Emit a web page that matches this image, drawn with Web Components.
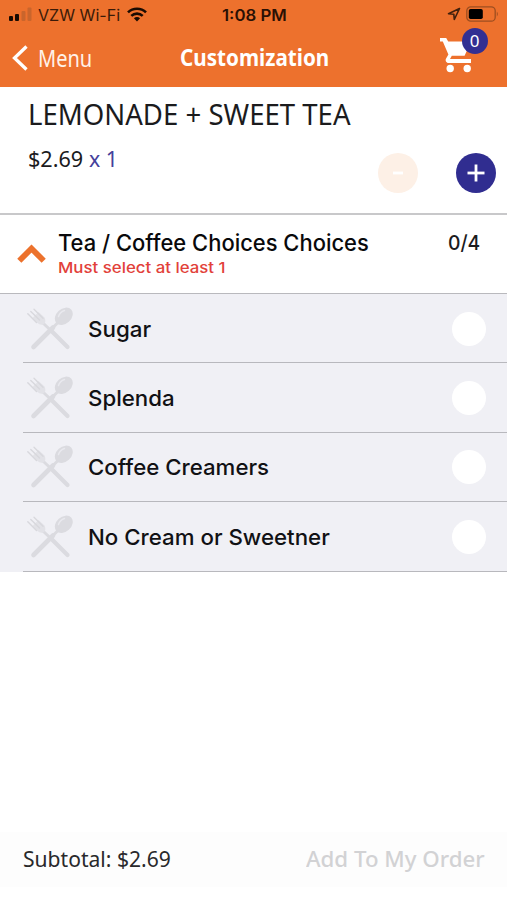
<!DOCTYPE html>
<html lang="en">
<head>
<meta charset="utf-8">
<title>Customization</title>
<style>
html,body{margin:0;padding:0;background:#fff}
body{width:507px;height:900px;overflow:hidden}
</style>
</head>
<body>
<order-screen></order-screen>
<script>
const SANS = "font-family:'Noto Sans','Open Sans',sans-serif;";
const UI = "font-family:Inter,'Liberation Sans',sans-serif;";

function define(name, html, setup) {
  customElements.define(name, class extends HTMLElement {
    connectedCallback() {
      if (this.shadowRoot) return;
      const root = this.attachShadow({ mode: 'open' });
      root.innerHTML = html;
      if (setup) setup(this, root);
    }
  });
}

/* A single line of text condensed or widened to the width given in "w". */
define('fit-text', `<style>
:host{display:block;white-space:nowrap;flex:none}
span{display:inline-block;transform-origin:0 50%;vertical-align:top}
</style><span><slot></slot></span>`, (host, root) => {
  const w = +host.getAttribute('w');
  const span = root.querySelector('span');
  host.style.width = w + 'px';
  span.style.transform = `scaleX(${w / span.offsetWidth})`;
});

define('signal-icon', `<style>:host{display:block;width:23px;height:14px}svg{display:block}</style>
<svg width="23" height="14"><g fill="#1a0b02"><rect x="0" y="9" width="4" height="5" rx="1"/><rect x="6" y="7" width="4" height="7" rx="1"/></g><g fill="#c9652c"><rect x="12.5" y="4" width="4" height="10" rx="1"/><rect x="18.5" y="0.5" width="4" height="13.5" rx="1"/></g></svg>`);

define('wifi-icon', `<style>:host{display:block;width:20px;height:15px}svg{display:block}</style>
<svg width="20" height="15" viewBox="0 0 20 15" fill="none" stroke="#1a0b02" stroke-width="2.6"><path d="M1 5.4C6 .5 14 .5 19 5.4"/><path d="M4.3 8.9c3.2-3 8.200-3 11.400 0"/><path d="M6.900 11.300c1.800-1.600 4.400-1.600 6.200 0L10 14.500z" fill="#1a0b02" stroke="none"/></svg>`);

define('location-icon', `<style>:host{display:block;width:14px;height:14px}svg{display:block}</style>
<svg width="14" height="14" viewBox="0 0 14 14"><path d="M12.500 1.500 1.500 6.700l5.300.5.500 5.300z" fill="none" stroke="#41200d" stroke-width="1.600" stroke-linejoin="round"/></svg>`);

define('battery-icon', `<style>:host{display:block;width:33px;height:16px}svg{display:block}</style>
<svg width="33" height="16" viewBox="0 0 33 16"><rect x=".8" y=".8" width="28.400" height="14.400" rx="4" fill="none" stroke="#9d4e20" stroke-width="1.300"/><rect x="2.800" y="3" width="14" height="10" rx="1.800" fill="#000"/><path d="M30.800 5.500q2 2.300 0 5z" fill="#9d4e20"/></svg>`);

define('status-bar', `<style>
:host{display:grid;grid-template-columns:1fr auto 1fr;height:30px;align-items:center;color:#3a1a08;${UI}font-size:15.500px;line-height:20px;box-sizing:border-box;padding:0 8px 0 9px}
.l,.r{display:flex;align-items:center}.r{justify-content:flex-end;margin-top:-2px}
.l fit-text,.c{padding-top:1px}
.c{font-weight:600;color:#2a1004}
signal-icon{margin:-2px 6px 0 0}wifi-icon{margin:-2px 0 0 7px}location-icon{margin-right:5px}
</style>
<div class="l"><signal-icon></signal-icon><fit-text w="82">VZW Wi-Fi</fit-text><wifi-icon></wifi-icon></div>
<fit-text class="c" w="65">1:08 PM</fit-text>
<div class="r"><location-icon></location-icon><battery-icon></battery-icon></div>`);

define('cart-button', `<style>
:host{display:block;position:relative;width:50px;height:46px}
svg{display:block}
b{position:absolute;left:21.500px;top:0;width:26px;height:26px;border-radius:50%;background:#322f92;color:#fff;font:400 17px/26px 'Noto Sans',sans-serif;text-align:center}
</style>
<svg width="50" height="46" viewBox="0 0 50 46"><g fill="#fff"><path d="M0 10h6.200l2 3.500H31l-6.400 14.300H11.800l-1.800 3.100H31V35H8.600c-2.400 0-3.700-2.500-2.500-4.500l2.300-4.100L2.800 13.400H0z"/><circle cx="10.200" cy="40.500" r="3.700"/><circle cx="27.200" cy="40.500" r="3.700"/></g></svg><b>0</b>`);

define('nav-bar', `<style>
:host{display:grid;grid-template-columns:1fr auto 1fr;height:57px;color:#fff;${SANS}font-size:23px;line-height:30px;box-sizing:border-box;padding:0 20px 0 12px}
.l{display:flex;align-items:flex-start;padding-top:13px;font-size:23px}
.l svg{margin:2px 10px 0 0}.l fit-text{color:#fff1e8}
.t{font-weight:700;margin:12px 0 0 9px}
cart-button{margin:-2px -3px 0 0}
.x{display:flex;justify-content:flex-end}
</style>
<div class="l"><svg width="16" height="26" viewBox="0 0 16 26"><path d="M14.500 1.500 2.500 13l12 11.500" fill="none" stroke="#fff" stroke-width="3.300"/></svg><fit-text w="54">Menu</fit-text></div>
<fit-text class="t" w="149">Customization</fit-text>
<div class="x"><cart-button></cart-button></div>`);

define('round-button', `<style>
:host{display:block;width:40px;height:40px;border-radius:50%;background:#302d90}
:host([disabled]){background:#fdf0e6}
svg{display:block}path{stroke:#fff;stroke-width:2.800;fill:none}
:host([disabled]) .v{display:none}:host([disabled]) .h{d:path("M15 20h10")}
</style><svg width="40" height="40"><path class="h" d="M11.500 20h17"/><path class="v" d="M20 11.500v17"/></svg>`);

define('item-summary', `<style>
:host{display:flex;justify-content:space-between;height:126px;box-sizing:border-box;padding:8px 11px 0 28px;color:#1b1b1d;${SANS}background:#fff}
.n{font-size:28.500px;line-height:38px}
.p{display:flex;gap:6px;font-size:22px;line-height:30px;margin-top:10px}
.p .q{color:#453f9b}
.s{display:flex;gap:38px;padding-top:58px;margin-left:-60px}
</style>
<div><fit-text class="n" w="323">LEMONADE + SWEET TEA</fit-text><div class="p"><fit-text w="55">$2.69</fit-text><fit-text class="q" w="29">x 1</fit-text></div></div>
<div class="s"><round-button disabled></round-button><round-button></round-button></div>`);

define('choice-group', `<style>
:host{display:block}
header{display:flex;height:81px;box-sizing:border-box;border-top:2px solid #c8c8ca;border-bottom:1.500px solid #b9b9bd;padding:0 27px 0 17px;color:#09090b;${UI}font-weight:500;background:#fff}
header svg{margin:28px 12px 0 0;flex:none}
.m{flex:1;padding-top:14px}
.a{font-size:22.500px;line-height:28px}
.e{font-size:15px;line-height:20px;color:#e2413a;margin-top:1px}
.c{font-size:20.500px;line-height:28px;margin-top:14px;color:#1b1b1d}
</style>
<header><svg width="29" height="21" viewBox="0 0 29 21"><path d="M2.300 17.800 14.500 5.500l12.200 12.300" fill="none" stroke="#ec722d" stroke-width="5.800"/></svg>
<div class="m"><fit-text class="a" w="311">Tea / Coffee Choices Choices</fit-text><fit-text class="e" w="167">Must select at least 1</fit-text></div>
<fit-text class="c" w="32">0/4</fit-text></header>
<slot></slot>`);

define('utensils-icon', `<style>:host{display:block;width:48px;height:44px;flex:none}svg{display:block}</style>
<svg width="48" height="44" viewBox="0 0 48 44"><g fill="none" stroke="#dbdbe0" stroke-linecap="round"><path d="M7.500 40 27 20.500" stroke-width="4.600"/><path d="M27 20.500 32 15.500" stroke-width="3"/><path d="M17.500 16.500 26 24.500" stroke-width="3"/><path d="M25 23.500 41.500 40" stroke-width="4.200"/></g>
<ellipse cx="37.800" cy="9.300" rx="7.500" ry="10" transform="rotate(48 37.800 9.300)" fill="#dbdbe0"/><path d="M32.500 9.500Q34 5 38.500 3.500" stroke="#e9e9ee" stroke-width="1.500" fill="none" stroke-linecap="round"/>
<path d="M6.500 11 12.500 5 18.500 10.500Q20.500 15 17.800 17.200 14.500 19 11 15.500z" fill="#e2e2e7"/><path d="M1.800 6.800 10.500 15.500M4.800 4.600l8.700 8.400M8 2.200l9 9" stroke="#d8d8dd" stroke-width="1.400" stroke-linecap="round" fill="none"/></svg>`);

define('choice-item', `<style>
:host{display:flex;height:69.400px;box-sizing:border-box;background:#f0f0f5;padding-left:23px}
div{flex:1;display:flex;align-items:center;border-bottom:1.500px solid #b8b8bd;padding:1px 21px 0 3px;color:#111114;${UI}font-weight:550;font-size:22px;line-height:30px}
i{margin-left:auto;width:34px;height:34px;border-radius:50%;background:#fff}
utensils-icon{margin:0 14px 0 0}
</style><div><utensils-icon></utensils-icon></div>`, (host, root) => {
  const text = document.createElement('fit-text');
  text.setAttribute('w', host.getAttribute('w'));
  text.textContent = host.getAttribute('label');
  root.querySelector('div').append(text, document.createElement('i'));
});

define('order-footer', `<style>
:host{display:flex;justify-content:space-between;align-items:center;height:55px;box-sizing:border-box;padding:0 22px 2px 23px;background:#fdfdfd;color:#29292b;${SANS}font-size:22.500px;line-height:30px}
.b{color:#d2d2d4;font-weight:500}
</style><fit-text w="148">Subtotal: $2.69</fit-text><fit-text class="b" w="179">Add To My Order</fit-text>`);

define('order-screen', `<style>
:host{display:flex;flex-direction:column;width:507px;height:900px;background:#fff}
.h{background:#ed712d;height:87px;flex:none}
.g{flex:1}
order-footer{margin-bottom:13px;flex:none}
</style>
<div class="h"><status-bar></status-bar><nav-bar></nav-bar></div>
<item-summary></item-summary>
<choice-group>
<choice-item label="Sugar" w="63"></choice-item>
<choice-item label="Splenda" w="87"></choice-item>
<choice-item label="Coffee Creamers" w="181"></choice-item>
<choice-item label="No Cream or Sweetner" w="242"></choice-item>
</choice-group>
<div class="g"></div>
<order-footer></order-footer>`);
</script>
</body>
</html>
